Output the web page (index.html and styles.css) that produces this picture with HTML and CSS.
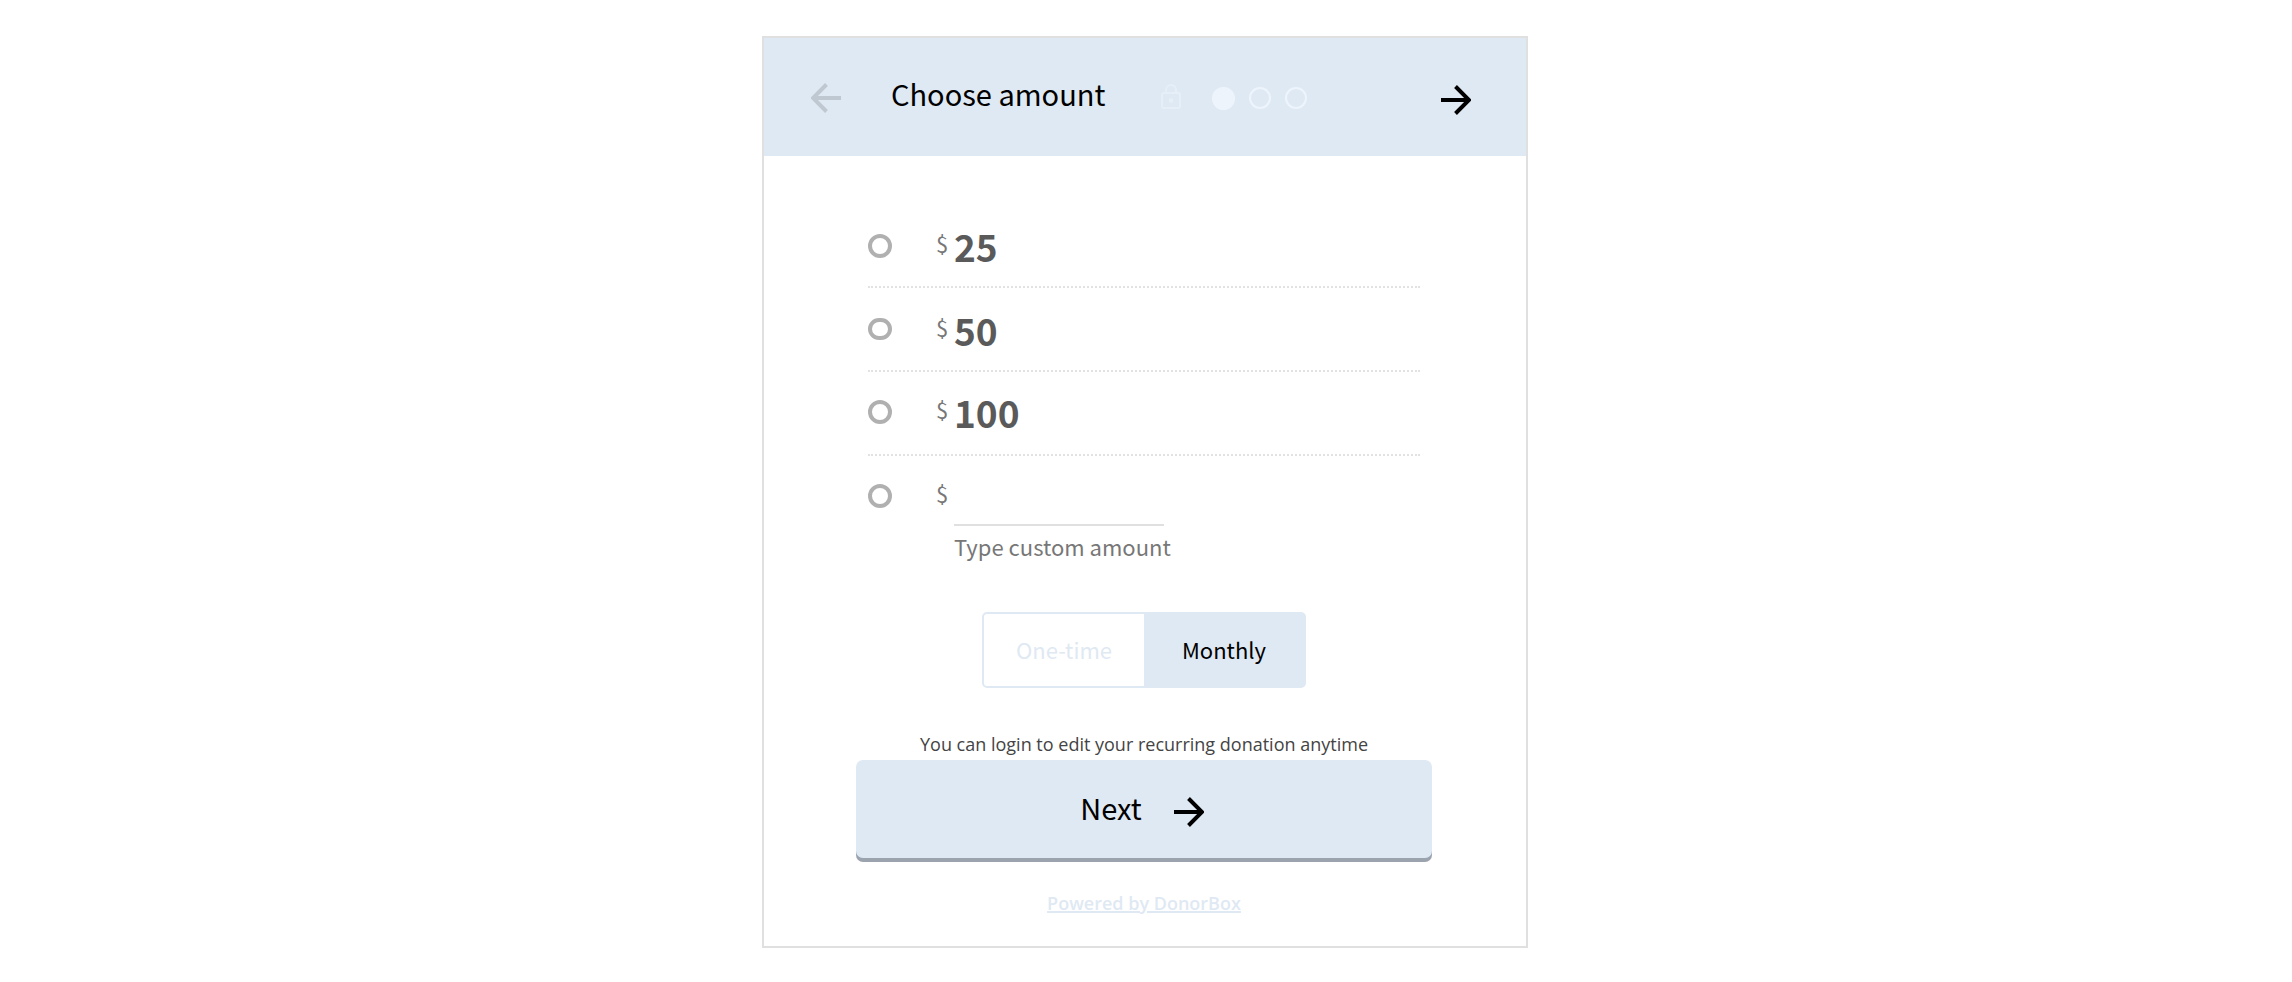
FILE: index.html
```html
<!DOCTYPE html>
<html lang="en">
<head>
<meta charset="utf-8">
<title>Choose amount</title>
<link rel="stylesheet" href="styles.css">
</head>
<body>
<form class="card">
  <header class="card-header">
    <button class="icon-button back" type="button" aria-label="Back" disabled>
      <svg class="arrow" viewBox="0 0 30 30"><path d="M30 15H3M15.500 1.500 2 15l13.500 13.500"/></svg>
    </button>
    <h1 class="title">Choose amount</h1>
    <svg class="lock" viewBox="0 0 20 26"><rect x="1" y="9" width="18" height="15" rx="2"/><path d="M5 9V6a5 5 0 0 1 10 0v3"/><circle class="keyhole" cx="10" cy="16.500" r="2.300"/></svg>
    <div class="steps">
      <span class="step current"></span>
      <span class="step"></span>
      <span class="step"></span>
    </div>
    <button class="icon-button forward" type="button" aria-label="Next step">
      <svg class="arrow" viewBox="0 0 30 30"><path d="M0 15h27M14.500 1.500 28 15 14.500 28.500"/></svg>
    </button>
  </header>
  <main class="card-body">
    <div class="amounts">
      <label class="amount"><input class="radio" type="radio" name="amount"><span class="currency">$</span><span class="value">25</span></label>
      <label class="amount"><input class="radio short" type="radio" name="amount"><span class="currency">$</span><span class="value">50</span></label>
      <label class="amount raised"><input class="radio" type="radio" name="amount"><span class="currency">$</span><span class="value">100</span></label>
      <div class="amount custom">
        <input class="radio" type="radio" name="amount" aria-label="Custom amount"><span class="currency">$</span>
        <div class="custom-field">
          <input class="custom-input" id="custom" type="text">
          <label class="custom-label" for="custom">Type custom amount</label>
        </div>
      </div>
    </div>
    <div class="frequency">
      <button class="option" type="button">One-time</button>
      <button class="option selected" type="button">Monthly</button>
    </div>
    <p class="note">You can login to edit your recurring donation anytime</p>
    <button class="next" type="button"><span class="next-label">Next</span>
      <svg class="arrow" viewBox="0 0 30 30"><path d="M0 15h27M14.500 1.500 28 15 14.500 28.500"/></svg>
    </button>
    <a class="powered" href="#">Powered by DonorBox</a>
  </main>
</form>
</body>
</html>
```
FILE: styles.css
```css
* {
  box-sizing: border-box;
}

body {
  margin: 0;
  padding: 36px 18px 32px 16px;
  background: #fff;
  color: #000;
  font-family: "Noto Sans CJK SC", "Noto Sans", sans-serif;
}

button {
  border: 0;
  padding: 0;
  background: none;
  color: inherit;
  font: inherit;
}

.card {
  max-width: 766px;
  margin: 0 auto;
  border: 2px solid #e0e0e0;
}

.card-header {
  display: flex;
  align-items: center;
  height: 118px;
  padding: 0 55px 0 47px;
  background: #dfe9f3;
}

.arrow {
  display: block;
  width: 30px;
  height: 30px;
  fill: none;
  stroke: #000;
  stroke-width: 4;
}

.icon-button {
  padding-top: 2px;
}

.back .arrow {
  stroke: #bfc8d1;
}

.title {
  margin: 0 0 0 50px;
  padding-bottom: 8px;
  font-size: 29px;
  font-weight: 400;
  line-height: 40px;
}

.lock {
  width: 20px;
  height: 26px;
  margin-left: 56px;
  fill: none;
  stroke: #e6eff7;
  stroke-width: 2;
}

.lock .keyhole {
  fill: #e6eff7;
  stroke: none;
}

.steps {
  display: flex;
  gap: 14px;
  margin-left: 31px;
  padding-top: 2px;
}

.step {
  width: 22px;
  height: 22px;
  border: 2px solid #eef4fb;
  border-radius: 50%;
}

.step.current {
  width: 23px;
  height: 23px;
  background: #eef4fb;
}

.forward {
  margin-left: auto;
  padding-top: 6px;
}

.card-body {
  display: flex;
  flex-direction: column;
  align-items: center;
  padding: 48px 94px 30px 92px;
}

.amounts {
  width: 100%;
  max-width: 552px;
}

.amount {
  display: flex;
  align-items: flex-start;
  height: 84px;
  padding-top: 30px;
  border-bottom: 2px dotted #e2e2e2;
}

.radio {
  appearance: none;
  width: 24px;
  height: 24px;
  margin: 0;
  border: 4px solid #b0b0b0;
  border-radius: 12px;
  background: #fff;
}

.radio.short {
  height: 22px;
}

.currency {
  width: 18px;
  margin-left: 44px;
  color: #777;
  font-size: 22px;
  line-height: 18px;
}

.value {
  color: #5a5a5a;
  font-size: 37px;
  font-weight: 700;
  line-height: 24px;
}

.amount.raised {
  padding-top: 28px;
}

.amount.custom {
  height: auto;
  padding-top: 28px;
  border-bottom: 0;
}

.custom-field {
  display: flex;
  flex-direction: column;
}

.custom-input {
  width: 210px;
  height: 42px;
  padding: 0;
  border: 0;
  border-bottom: 2px solid #e0e0e0;
  outline: 0;
  background: none;
  color: #5a5a5a;
  font: inherit;
  font-size: 28px;
}

.custom-label {
  margin-top: 4px;
  color: #777;
  font-size: 22px;
  line-height: 32px;
}

.frequency {
  display: flex;
  margin-top: 50px;
  border: 2px solid #dfe9f3;
  border-radius: 5px;
}

.option {
  width: 160px;
  height: 72px;
  padding-bottom: 2px;
  color: #dfe9f3;
  font-size: 22px;
}

.option.selected {
  background: #dfe9f3;
  color: #000;
}

.note {
  margin: 42px 0 2px;
  color: #444;
  font-family: "Open Sans", sans-serif;
  font-size: 18px;
  line-height: 28px;
}

.next {
  display: flex;
  align-items: center;
  justify-content: center;
  gap: 32px;
  width: 100%;
  max-width: 576px;
  height: 98px;
  padding: 6px 4px 0 0;
  border-radius: 7px;
  background: #dfe9f3;
  box-shadow: 0 4px 0 #9aa3ae;
}

.next-label {
  padding-bottom: 10px;
  font-size: 29px;
  line-height: 40px;
}

.powered {
  margin-top: 32px;
  color: #dfe9f3;
  font-family: "Open Sans", sans-serif;
  font-size: 18px;
  font-weight: 600;
  line-height: 26px;
  text-decoration-thickness: 2px;
}
```
